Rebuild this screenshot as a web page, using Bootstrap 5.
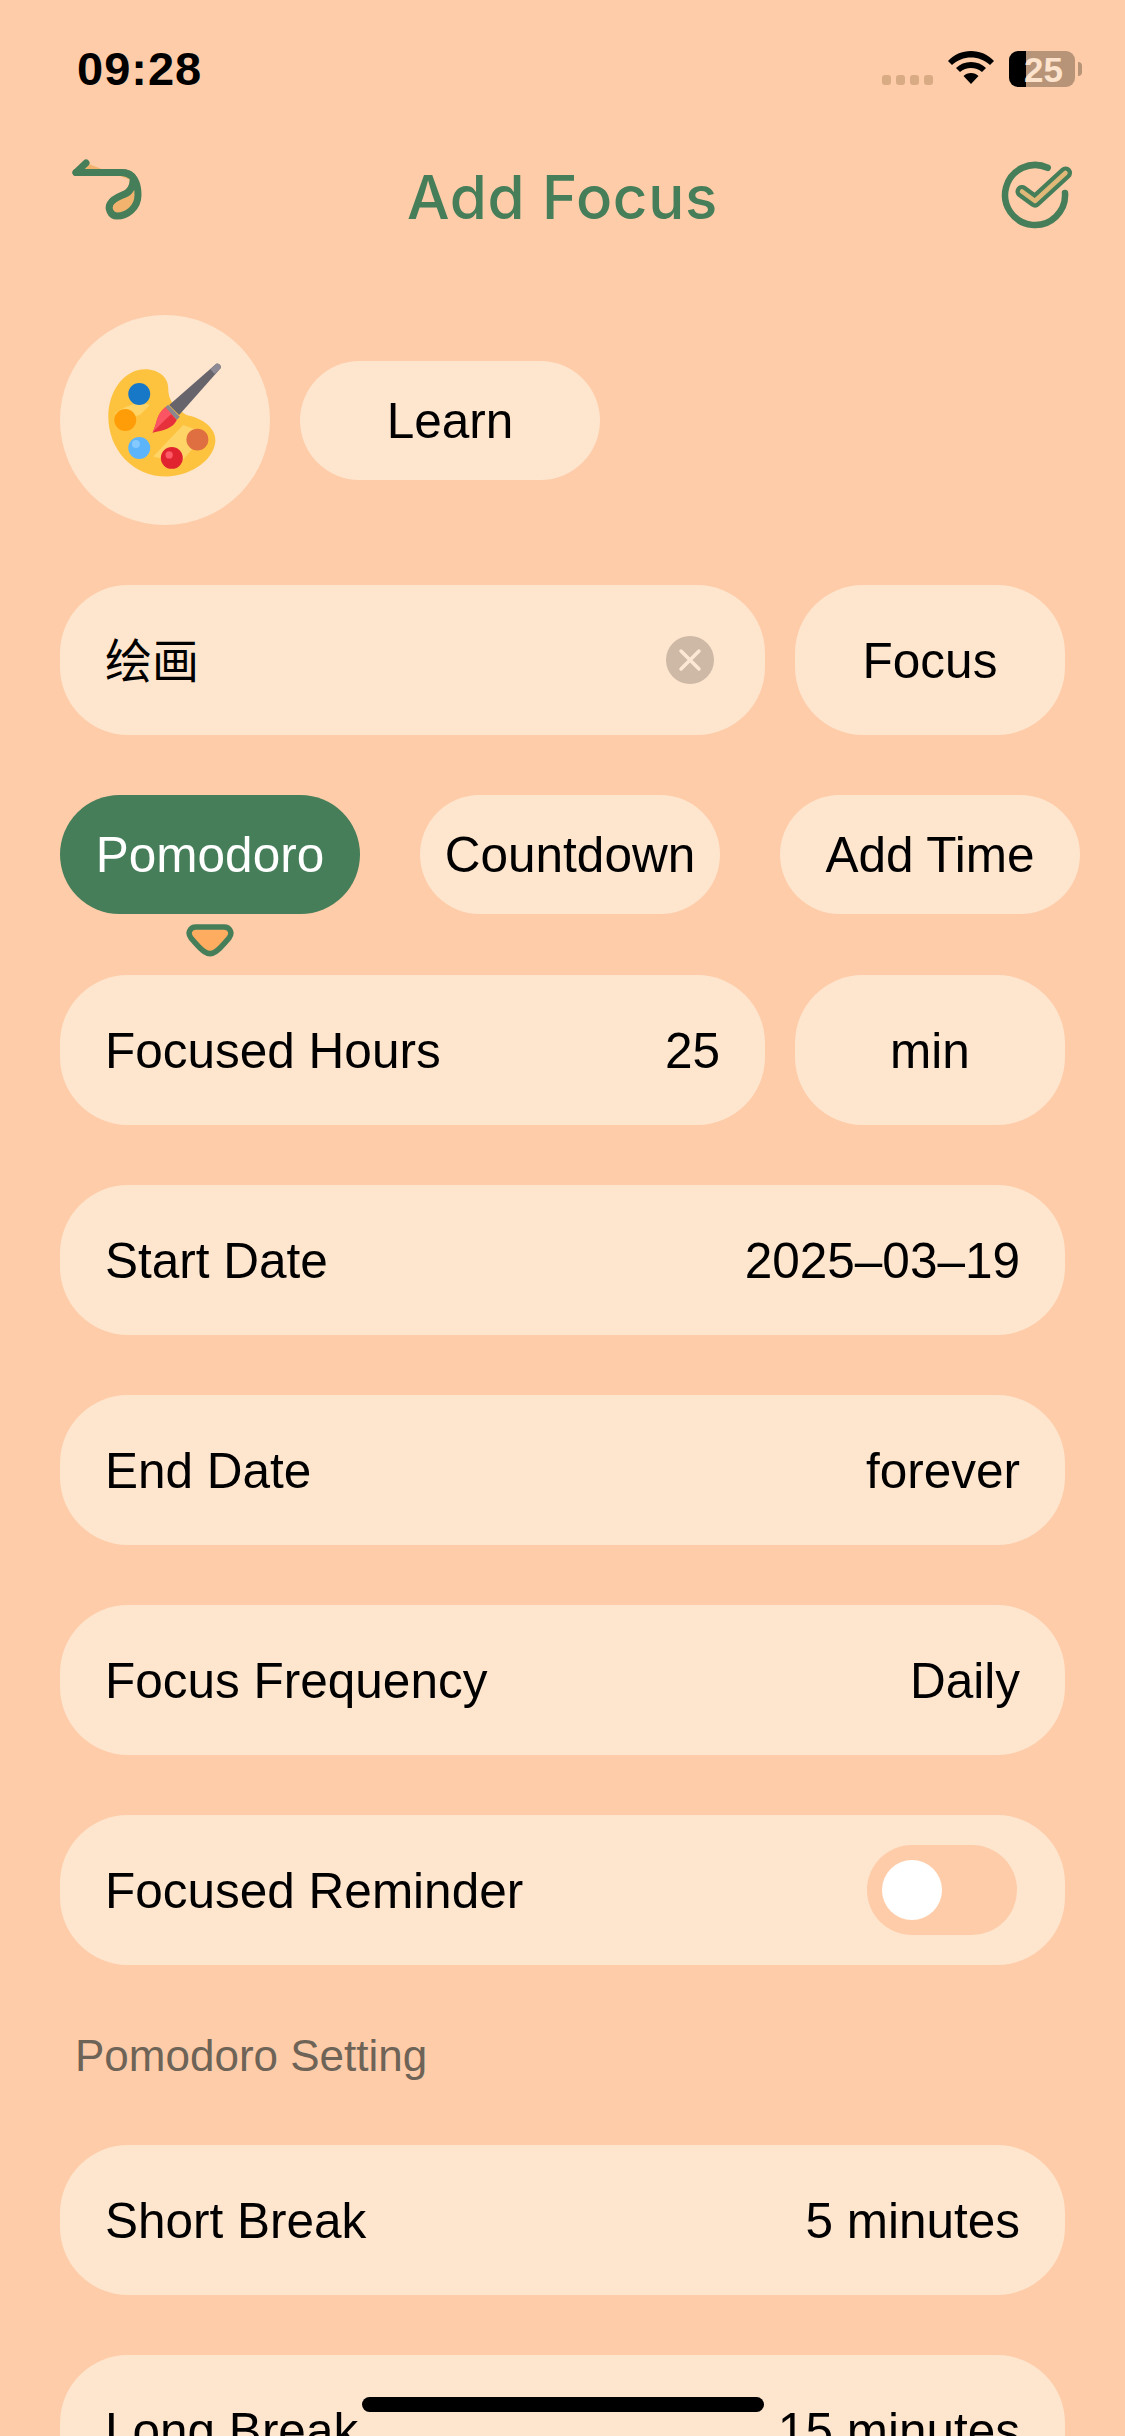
<!DOCTYPE html>
<html lang="en"><head><meta charset="utf-8"><title>Add Focus</title>
<link href="https://cdn.jsdelivr.net/npm/bootstrap@5.3.0/dist/css/bootstrap.min.css" rel="stylesheet">
<style>
html,body{margin:0;background:#fecca8}
body{font-family:"Liberation Sans","Noto Sans CJK SC",sans-serif;color:#000}
.screen{position:relative;width:1125px;height:2436px;overflow:hidden;background:#fecca8;padding:0 60px}
.status{height:130px;padding:0 0 0 17px;margin:0 -17px 0 0}
.clock{font-family:"Liberation Sans",sans-serif;font-weight:700;font-size:47px;line-height:1;margin-top:45px;letter-spacing:1px}
.stat-right{margin-top:51px;height:36px}
.dots{gap:5px;margin:24px 15px 0 0}
.dots i{display:block;width:9px;height:10px;border-radius:3px;background:#d9ab85}
.batt{width:66px;height:36px;border-radius:9px;margin-left:15px;background:linear-gradient(90deg,#000 17px,#b79478 17px);color:#fde2cc;font:700 35px/37px "Liberation Sans",sans-serif;text-align:right;padding-right:12px}
.batt-cap{width:4px;height:14px;margin:11px 0 0 3px;border-radius:0 4px 4px 0;background:#b79478}
.head{height:100px}
.head-title{font-family:Inter,sans-serif;font-size:60px;font-weight:500;color:#467e5a;line-height:100px;margin:34px 0 0 0;letter-spacing:.7px}
.ico-slot{width:90px;height:100px;flex:none}
.ico-check{width:100px;margin-right:-10px}
.top-row{margin-top:85px;height:210px;gap:30px}
.avatar{width:210px;height:210px;border-radius:50%;background:#fee5ce}
.pill{background:#fee5ce;height:150px;border-radius:68px;font-size:49.5px;padding-top:2px}
.pill-pad{padding:2px 45px 0}
.short{width:300px;height:119px;border-radius:60px}
.stack{margin-top:60px}
.gap30{gap:30px}
.unit{width:270px;flex:none}
.seg-row{margin-top:60px;gap:60px;width:1040px}
.seg-on{background:#467e5a;color:#fff;position:relative}
.marker{position:absolute;left:126px;top:129px}
.after-seg{margin-top:61px}
.clear{width:48px;height:48px;border-radius:50%;background:#cdb9a6;margin:-2px 6px 0 0}
.toggle{width:150px;height:90px;border-radius:45px;background:#fecca8;padding:15px;margin:-2px 3px 0 0}
.knob{width:60px;height:60px;border-radius:50%;background:#fff}
.sec-title{font-size:44px;line-height:50px;color:#6e6357;margin:66px 0 0 15px}
.mt-sec{margin-top:64px}
.home-bar{position:absolute;left:362px;top:2397px;width:402px;height:15px;border-radius:8px;background:#000}
.cjk{font-family:"Noto Sans CJK SC",sans-serif;font-size:47px;margin-top:-6px}
</style></head><body>
<div class="screen">
  <div class="status d-flex justify-content-between align-items-start">
    <div class="clock">09:28</div>
    <div class="stat-right d-flex align-items-start">
      <div class="dots d-flex"><i></i><i></i><i></i><i></i></div>
      <svg width="46" height="33" viewBox="0 0 46 33"><path d="M23 0C14 0 6 3.500 0 10L4 14C9.500 9 16 6.500 23 6.500S36.500 9 42 14L46 10C40 3.500 32 0 23 0ZM23 11C17 11 12 13 8 17L12 21C15 18.500 19 17 23 17S31 18.500 34 21L38 17C34 13 29 11 23 11ZM23 22C20 22 17.500 23 15.500 25L23 33L30.500 25C28.500 23 26 22 23 22Z" fill="#000"/></svg>
      <div class="batt">25</div><div class="batt-cap"></div>
    </div>
  </div>
  <div class="head d-flex justify-content-between align-items-center">
    <div class="ico-slot">
      <svg width="90" height="100" viewBox="0 0 90 100"><path d="M26 33 L16 42.500 L61 42.500 C75 42.500 78 55 78 65 C78 78 67 86 57 86 C50 86 48 78 50 74 C53 68 61 66 65 64 C70 62 73 56 73 51" fill="#f2b36e" stroke="#467e5a" stroke-width="7" stroke-linecap="round" stroke-linejoin="round"/><path d="M16 42.500 L61 42.500 C68 42.500 72 45 74 49" fill="none" stroke="#467e5a" stroke-width="7" stroke-linecap="round"/></svg>
    </div>
    <h1 class="head-title">Add Focus</h1>
    <div class="ico-slot ico-check">
      <svg width="100" height="100" viewBox="0 0 100 100"><path d="M72.700 37.800 A30 30 0 1 0 90 63" fill="none" stroke="#467e5a" stroke-width="6.500" stroke-linecap="round"/><path d="M47 61.500 L60 71 L90.500 43" fill="none" stroke="#467e5a" stroke-width="13" stroke-linecap="round" stroke-linejoin="round"/><path d="M47 61.500 L60 71 L90.500 43" fill="none" stroke="#e2b878" stroke-width="4.500" stroke-linecap="round" stroke-linejoin="round"/></svg>
    </div>
  </div>

  <div class="top-row d-flex align-items-center">
    <div class="avatar d-flex align-items-center justify-content-center">
      <svg width="123" height="120" viewBox="192 180 370 360"><path d="M315 207C360 207 385 235 385 262C385 300 400 320 440 345C490 355 530 385 527 425C520 490 440 530 380 530C280 530 205 450 205 350C205 270 255 207 315 207Z" fill="#fdc33f"/><path d="M225 340C250 320 300 300 330 315L300 345C280 350 240 360 225 340ZM340 470L430 375L500 400L420 490Z" fill="#fed466"/><circle cx="298" cy="282" r="33" fill="#1878c8"/><circle cx="256" cy="360" r="33" fill="#ff9d08"/><circle cx="298" cy="444" r="33" fill="#5cb4fa"/><circle cx="396" cy="474" r="33" fill="#e0232f"/><circle cx="473" cy="419" r="33" fill="#df6f41"/><circle cx="388" cy="465" r="11" fill="#ff5a67"/><circle cx="288" cy="432" r="12" fill="#84c9ff"/><path d="M388 315L528 192C535 186 548 198 542 205L418 345Z" fill="#67646c"/><path d="M528 192C535 186 548 198 542 205L525 222L512 207Z" fill="#8d8a96"/><path d="M376 322L385 314L420 350L411 360Z" fill="#8a8790"/><path d="M376 322L411 360C400 385 370 392 338 398C352 372 348 345 376 322Z" fill="#e6303c"/><path d="M376 322L395 342C375 360 360 375 338 398C352 372 348 345 376 322Z" fill="#fb5563"/></svg>
    </div>
    <div class="pill short d-flex align-items-center justify-content-center">Learn</div>
  </div>

  <div class="stack d-flex gap30">
    <div class="pill pill-pad flex-grow-1 d-flex align-items-center justify-content-between">
      <span class="cjk">绘画</span>
      <span class="clear d-flex align-items-center justify-content-center"><svg width="24" height="24" viewBox="0 0 24 24"><path d="M3 3L21 21M21 3L3 21" stroke="#fde8d6" stroke-width="3.500" stroke-linecap="round"/></svg></span>
    </div>
    <div class="pill unit d-flex align-items-center justify-content-center">Focus</div>
  </div>

  <div class="seg-row d-flex">
    <div class="pill short seg-on d-flex align-items-center justify-content-center">Pomodoro
      <svg class="marker" width="48" height="33" viewBox="0 0 48 33"><path d="M10 3H38C44 3 47 9 43 14C38 20 33 26 29 28C26 30 22 30 19 28C15 26 10 20 5 14C1 9 4 3 10 3Z" fill="#fdac60" stroke="#467e5a" stroke-width="5.500"/></svg>
    </div>
    <div class="pill short d-flex align-items-center justify-content-center">Countdown</div>
    <div class="pill short d-flex align-items-center justify-content-center">Add Time</div>
  </div>

  <div class="after-seg d-flex gap30">
    <div class="pill pill-pad flex-grow-1 d-flex align-items-center justify-content-between"><span>Focused Hours</span><span>25</span></div>
    <div class="pill unit d-flex align-items-center justify-content-center">min</div>
  </div>

  <div class="stack pill pill-pad d-flex align-items-center justify-content-between"><span>Start Date</span><span>2025–03–19</span></div>
  <div class="stack pill pill-pad d-flex align-items-center justify-content-between"><span>End Date</span><span>forever</span></div>
  <div class="stack pill pill-pad d-flex align-items-center justify-content-between"><span>Focus Frequency</span><span>Daily</span></div>
  <div class="stack pill pill-pad d-flex align-items-center justify-content-between"><span>Focused Reminder</span><div class="toggle"><div class="knob"></div></div></div>

  <div class="sec-title">Pomodoro Setting</div>

  <div class="mt-sec pill pill-pad d-flex align-items-center justify-content-between"><span>Short Break</span><span>5 minutes</span></div>
  <div class="stack pill pill-pad d-flex align-items-center justify-content-between"><span>Long Break</span><span>15 minutes</span></div>

  <div class="home-bar"></div>
</div>
<script src="https://cdn.jsdelivr.net/npm/bootstrap@5.3.0/dist/js/bootstrap.bundle.min.js"></script>
</body></html>
